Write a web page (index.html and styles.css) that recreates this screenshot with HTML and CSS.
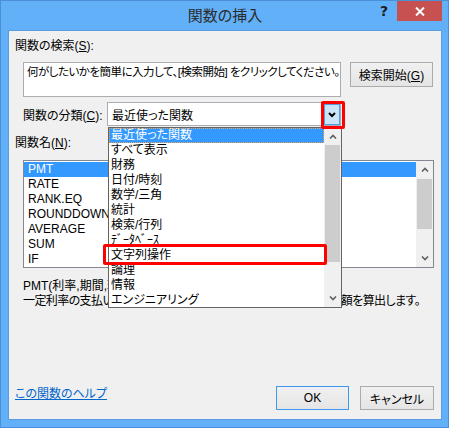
FILE: index.html
```html
<!DOCTYPE html>
<html lang="ja">
<head>
    <meta charset="UTF-8">
    <title>関数の挿入</title>
    <link rel="stylesheet" href="styles.css">
</head>
<body>
<div class="window">
    <div class="titlebar">
        <span></span>
        <span class="title">関数の挿入</span>
        <div class="caption-buttons">
            <span class="help-btn">?</span>
            <span class="close-btn">
                <svg width="10" height="9" viewBox="0 0 10 9"><path d="M1 0.5 L9 8.5 M9 0.5 L1 8.5" stroke="#fff" stroke-width="2"/></svg>
            </span>
        </div>
    </div>

    <div class="client">
        <div class="label">関数の検索(<u>S</u>):</div>
        <div class="search-row">
            <div class="search-box">何がしたいかを簡単に入力して、[検索開始] をクリックしてください。</div>
            <button class="btn btn-search">検索開始(<u>G</u>)</button>
        </div>

        <div class="category-row">
            <span class="category-label">関数の分類(<u>C</u>):</span>
            <div class="combo">
                <span>最近使った関数</span>
                <span class="combo-arrow">
                    <svg width="8" height="6" viewBox="0 0 8 6"><path d="M1 1 L4 4 L7 1" fill="none" stroke="#000" stroke-width="2"/></svg>
                </span>
            </div>
        </div>

        <div class="label label-name">関数名(<u>N</u>):</div>
        <div class="func-list">
            <ul class="items">
                <li class="selected">PMT</li>
                <li>RATE</li>
                <li>RANK.EQ</li>
                <li>ROUNDDOWN</li>
                <li>AVERAGE</li>
                <li>SUM</li>
                <li>IF</li>
            </ul>
            <div class="scrollbar">
                <span class="scroll-arrow"><svg width="8" height="5" viewBox="0 0 8 5"><path d="M1 4.5 L4 1.5 L7 4.5" fill="none" stroke="#606060" stroke-width="1.6"/></svg></span>
                <span class="thumb thumb-short"></span>
                <span class="scroll-arrow scroll-down"><svg width="8" height="5" viewBox="0 0 8 5"><path d="M1 0.5 L4 3.5 L7 0.5" fill="none" stroke="#606060" stroke-width="1.6"/></svg></span>
            </div>
        </div>

        <div class="desc">
            <div>PMT(利率,期間,現在価値,将来価値,支払期日)</div>
            <div class="desc-text">一定利率の支払いが定期的に行われる場合の、ローンの定期支払額を算出します。</div>
        </div>

        <div class="bottom-row">
            <a class="help-link" href="#">この関数のヘルプ</a>
            <div class="dialog-buttons">
                <button class="btn btn-ok">OK</button>
                <button class="btn btn-cancel">キャンセル</button>
            </div>
        </div>

        <!-- 開いたドロップダウン -->
        <div class="dropdown">
            <ul class="items">
                <li class="selected focus">最近使った関数</li>
                <li>すべて表示</li>
                <li>財務</li>
                <li>日付/時刻</li>
                <li>数学/三角</li>
                <li>統計</li>
                <li>検索/行列</li>
                <li>ﾃﾞｰﾀﾍﾞｰｽ</li>
                <li>文字列操作</li>
                <li>論理</li>
                <li>情報</li>
                <li>エンジニアリング</li>
            </ul>
            <div class="scrollbar">
                <span class="scroll-arrow"><svg width="8" height="5" viewBox="0 0 8 5"><path d="M1 4.5 L4 1.5 L7 4.5" fill="none" stroke="#606060" stroke-width="1.6"/></svg></span>
                <span class="thumb thumb-long"></span>
                <span class="scroll-arrow scroll-down"><svg width="8" height="5" viewBox="0 0 8 5"><path d="M1 0.5 L4 3.5 L7 0.5" fill="none" stroke="#606060" stroke-width="1.6"/></svg></span>
            </div>
        </div>

        <div class="mark mark-arrow"></div>
        <div class="mark mark-item"></div>
    </div>
</div>
</body>
</html>
```

FILE: styles.css
```css
* {
    box-sizing: border-box;
}

body {
    margin: 0;
    font-family: "Liberation Sans", "Noto Sans CJK JP", sans-serif;
    font-size: 12px;
    font-feature-settings: "palt";
    color: #000;
}

.window {
    width: 449px;
    height: 428px;
    background-color: #62b0f8;
    border: 1px solid #4b8fd6;
    padding: 0 6px 7px 7px;
    display: flex;
    flex-direction: column;
}

.titlebar {
    height: 29px;
    display: grid;
    grid-template-columns: 1fr auto 1fr;
}

.title {
    font-size: 15px;
    line-height: 30px;
    color: #2b2b2b;
}

.caption-buttons {
    justify-self: end;
    display: flex;
}

.help-btn {
    width: 26px;
    height: 20px;
    line-height: 20px;
    text-align: center;
    font-family: "DejaVu Sans", sans-serif;
    font-weight: bold;
    font-size: 14px;
    color: #1e1e1e;
}

.close-btn {
    width: 45px;
    height: 20px;
    background-color: #c75050;
    display: flex;
    align-items: center;
    justify-content: center;
}

.client {
    position: relative;
    width: 434px;
    height: 390px;
    background-color: #f0f0f0;
    border: 1px solid #5a9de0;
    padding: 8px 7px 9px 6px;
    display: flex;
    flex-direction: column;
}

.label {
    line-height: 15px;
}

.search-row {
    display: flex;
    align-items: flex-start;
    margin: 8px 0 0 8px;
}

.search-box {
    width: 318px;
    height: 35px;
    background-color: #fff;
    border: 1px solid #abadb3;
    padding: 2px 3px;
    font-size: 11.5px;
    letter-spacing: -0.5px;
    line-height: 15px;
    white-space: nowrap;
    overflow: hidden;
}

.btn {
    font: inherit;
    color: #000;
    background: linear-gradient(#f0f0f0, #e5e5e5);
    border: 1px solid #acacac;
    padding: 0;
}

.btn-search {
    width: 83px;
    height: 25px;
    margin-left: 9px;
}

.category-row {
    display: flex;
    align-items: center;
    margin: 5px 0 0 8px;
}

.category-label {
    width: 84px;
}

.combo {
    width: 234px;
    height: 24px;
    background-color: #fff;
    border: 1px solid #abadb3;
    padding-left: 4px;
    display: flex;
    align-items: center;
}

.combo-arrow {
    margin-left: auto;
    align-self: flex-start;
    margin-top: 1px;
    width: 16px;
    height: 21px;
    background-color: #cce4f7;
    border: 1px solid #569de5;
    display: flex;
    align-items: center;
    justify-content: center;
}

.label-name {
    margin-top: 10px;
}

.func-list {
    width: 411px;
    height: 108px;
    margin: 9px 0 0 8px;
    background-color: #fff;
    border: 1px solid #828790;
    display: flex;
}

.items {
    list-style: none;
    margin: 0;
    padding: 0;
    flex: 1;
}

.items li {
    height: 15px;
    line-height: 15px;
    white-space: nowrap;
    overflow: hidden;
}

.func-list .items {
    padding-top: 1px;
}

.func-list .items li {
    padding-left: 4px;
}

.items .selected {
    background-color: #3399ff;
    color: #fff;
}

.scrollbar {
    width: 17px;
    background-color: #f0f0f0;
    display: flex;
    flex-direction: column;
}

.scroll-arrow {
    height: 17px;
    display: flex;
    align-items: center;
    justify-content: center;
}

.scroll-down {
    margin-top: auto;
}

.thumb {
    margin: 0 1px;
    background-color: #cdcdcd;
}

.thumb-short {
    margin-top: 1px;
    height: 50px;
}

.thumb-long {
    height: 117px;
}

.desc {
    margin: 11px 0 0 8px;
    line-height: 15px;
    white-space: nowrap;
}

.desc-text {
    letter-spacing: -0.6px;
}

.bottom-row {
    margin-top: auto;
    display: flex;
    align-items: flex-start;
}

.help-link {
    margin-top: 1px;
    line-height: 15px;
    color: #0066cc;
}

.dialog-buttons {
    margin-left: auto;
    display: flex;
    gap: 11px;
}

.btn-ok {
    width: 73px;
    height: 24px;
    border-color: #3c99f0;
}

.btn-cancel {
    width: 74px;
    height: 24px;
}

/* ドロップダウン（開いた状態） */
.dropdown {
    position: absolute;
    left: 99px;
    top: 96px;
    width: 234px;
    height: 181px;
    background-color: #fff;
    border: 1px solid #646464;
    display: flex;
}

.dropdown .items li {
    padding-left: 2px;
}

.dropdown .items .focus {
    outline: 1px dotted #e9a45a;
    outline-offset: -1px;
}

.mark {
    position: absolute;
    border: 3px solid #ff0000;
    border-radius: 2px;
}

.mark-arrow {
    left: 312px;
    top: 70px;
    width: 24px;
    height: 28px;
}

.mark-item {
    left: 94px;
    top: 213px;
    width: 224px;
    height: 21px;
}
```
